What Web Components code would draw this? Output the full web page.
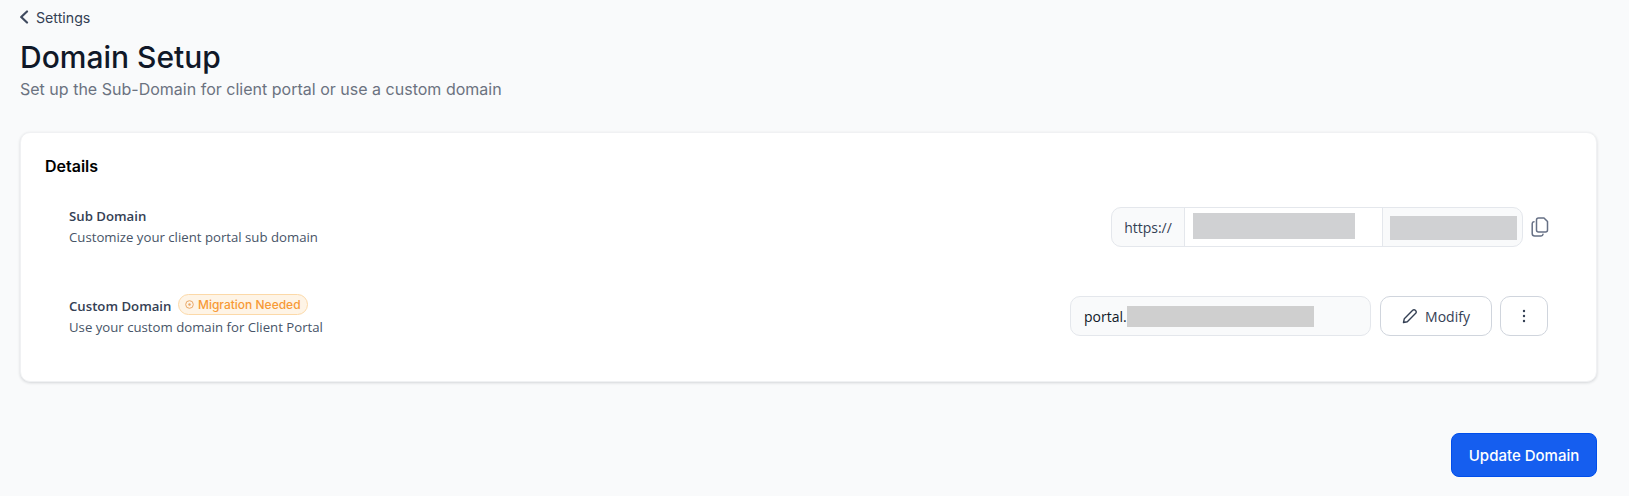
<!DOCTYPE html>
<html lang="en">
<head>
<meta charset="UTF-8">
<title>Domain Setup</title>
<style>
  html, body { margin: 0; height: 100%; }
  body { background: #f9fafb; font-family: Inter, "Liberation Sans", sans-serif; overflow: hidden; }
</style>
</head>
<body>
<page-head back="Settings" heading="Domain Setup" sub="Set up the Sub-Domain for client portal or use a custom domain"></page-head>

<details-card heading="Details">
  <setting-row>
    <span slot="name">Sub Domain</span>
    <span slot="desc">Customize your client portal sub domain</span>
    <domain-group></domain-group>
  </setting-row>
  <setting-row class="second">
    <span slot="name">Custom Domain</span>
    <warn-badge slot="badge">Migration Needed</warn-badge>
    <span slot="desc">Use your custom domain for Client Portal</span>
    <custom-domain></custom-domain>
  </setting-row>
</details-card>

<page-foot><primary-btn>Update Domain</primary-btn></page-foot>

<template id="head-tpl">
  <style>
    :host { display: block; padding: 8px 20px 0; }
    .back { display: flex; align-items: center; gap: 6px; height: 18px; font-size: 14.2px; color: #344054; }
    svg { display: block; }
    h1 { margin: 12px 0 0; font-size: 30px; line-height: 38px; font-weight: 500; color: #101828; }
    p { margin: 3px 0 0; font-size: 16px; line-height: 20px; letter-spacing: .01px; color: #6b7280; }
  </style>
  <div class="back">
    <svg width="10" height="14" viewBox="0 0 10 14" fill="none" stroke="#3f4a5f" stroke-width="2.200" stroke-linecap="round" stroke-linejoin="round"><path d="M7 1.500 1.200 7 7 12.500"/></svg>
    <span id="back"></span>
  </div>
  <h1 id="heading"></h1>
  <p id="sub"></p>
</template>

<template id="card-tpl">
  <style>
    :host { display: block; margin: 33px 32px 0 20px; height: 250px; box-sizing: border-box; background: #fff; border-radius: 10px; border: 1px solid #f0f1f3; box-shadow: 0 1px 3px rgba(16,24,40,.16); padding: 23px 24px 0; }
    h2 { margin: 0 0 31px; font-size: 16px; line-height: 20px; font-weight: 600; color: #000; }
  </style>
  <h2 id="heading"></h2>
  <slot></slot>
</template>

<template id="row-tpl">
  <style>
    :host { display: flex; align-items: center; justify-content: space-between; padding: 0 24px; height: 40px; font-family: "Open Sans", "Noto Sans", sans-serif; }
    :host(.second) { margin-top: 49px; }
    :host(:not(.second)) .text { margin-top: -2px; }
    .name { display: flex; align-items: center; gap: 7px; font-size: 13.2px; line-height: 20px; font-weight: 600; color: #344054; }
    .desc { font-size: 13.2px; line-height: 20px; color: #475467; margin-top: 1px; }
  </style>
  <div class="text">
    <div class="name"><slot name="name"></slot><slot name="badge"></slot></div>
    <div class="desc"><slot name="desc"></slot></div>
  </div>
  <slot></slot>
</template>

<template id="badge-tpl">
  <style>
    :host { display: inline-flex; align-items: center; gap: 3.500px; height: 21px; margin-top: -2px; padding: 0 6px; box-sizing: border-box; background: #fef4e6; border: 1px solid #fcd9a8; border-radius: 11px; font-family: Inter, sans-serif; font-size: 12px; font-weight: 500; color: #f79a36; }
    svg { display: block; }
  </style>
  <svg width="9" height="9" viewBox="0 0 9 9" fill="none" stroke="#e9a868"><circle cx="4.500" cy="4.500" r="3.800"/><circle cx="4.500" cy="4.500" r="1.200" fill="#e9a868" stroke="none"/></svg>
  <slot></slot>
</template>

<template id="group-tpl">
  <style>
    :host { display: flex; align-items: center; gap: 8px; margin-right: -1px; }
    .group { display: flex; width: 412px; height: 40px; box-sizing: border-box; border: 1px solid #e4e7ec; border-radius: 10px; overflow: hidden; background: #f9fafb; }
    .pre { width: 72px; box-sizing: border-box; display: flex; align-items: center; justify-content: center; font-size: 14px; color: #344054; }
    .mid { width: 199px; box-sizing: border-box; background: #fff; border-left: 1px solid #e4e7ec; border-right: 1px solid #e4e7ec; padding: 5px 0 0 8px; }
    .suf { flex: 1; padding: 8px 0 0 7px; }
    .blur { background: #d0d1d3; }
    svg { display: block; margin-top: -1px; }
  </style>
  <div class="group">
    <div class="pre">https://</div>
    <div class="mid"><div class="blur" style="width:162px;height:26px"></div></div>
    <div class="suf"><div class="blur" style="width:127px;height:24px"></div></div>
  </div>
  <svg width="18" height="20" viewBox="0 0 18 20" fill="none" stroke="#667085" stroke-width="1.500" stroke-linecap="round" stroke-linejoin="round">
    <path d="M7.500 1H13l3.500 3.500V13a2 2 0 0 1-2 2H7.500a2 2 0 0 1-2-2V3a2 2 0 0 1 2-2Z"/>
    <path d="M3 4.700A2 2 0 0 0 1.200 6.700v9.800A2.500 2.500 0 0 0 3.700 19H10a2 2 0 0 0 2-1.800"/>
  </svg>
</template>

<template id="custom-tpl">
  <style>
    :host { display: flex; align-items: center; gap: 9px; }
    .input { width: 301px; height: 40px; box-sizing: border-box; display: flex; align-items: center; padding-left: 13px; border: 1px solid #e4e7ec; border-radius: 10px; background: #f9fafb; font-size: 14px; color: #101828; }
    .blur { width: 187px; height: 21px; background: #cfcfcf; }
    svg { display: block; }
  </style>
  <div class="input">portal.<div class="blur"></div></div>
  <outline-btn style="width:112px">
    <svg width="16" height="16" viewBox="0 0 16 16" fill="none" stroke="#344054" stroke-width="1.400" stroke-linecap="round" stroke-linejoin="round"><path d="M1.500 14.500l.8-3.800 8.400-8.400a1.800 1.800 0 0 1 2.600 0l.4.400a1.800 1.800 0 0 1 0 2.600l-8.400 8.400-3.800.8Z"/></svg>
    Modify
  </outline-btn>
  <outline-btn style="width:48px;margin-left:-1px">
    <svg width="4" height="14" viewBox="0 0 4 14" fill="#344054"><circle cx="2" cy="2" r="1.200"/><circle cx="2" cy="7" r="1.200"/><circle cx="2" cy="12" r="1.200"/></svg>
  </outline-btn>
</template>

<template id="outline-tpl">
  <style>
    :host { display: inline-flex; align-items: center; justify-content: center; gap: 7px; height: 40px; box-sizing: border-box; background: #fff; border: 1px solid #d0d5dd; border-radius: 10px; font-size: 14px; font-weight: 500; color: #344054; }
  </style>
  <slot></slot>
</template>

<template id="foot-tpl">
  <style>
    :host { display: flex; justify-content: flex-end; margin: 51px 32px 0 0; }
  </style>
  <slot></slot>
</template>

<template id="primary-tpl">
  <style>
    :host { display: inline-flex; align-items: center; justify-content: center; width: 146px; height: 44px; box-sizing: border-box; background: #155eef; border: 1px solid #004eeb; border-radius: 8px; font-size: 15px; font-weight: 500; color: #fff; }
  </style>
  <slot></slot>
</template>

<script>
  // every component just clones its template into an open shadow root
  function comp(tag, tplId, setup) {
    customElements.define(tag, class extends HTMLElement {
      connectedCallback() {
        if (this.shadowRoot) return;
        this.attachShadow({mode: 'open'});
        this.shadowRoot.append(document.getElementById(tplId).content.cloneNode(true));
        if (setup) setup(this, this.shadowRoot);
      }
    });
  }

  comp('page-head', 'head-tpl', (el, root) => {
    for (const k of ['back', 'heading', 'sub']) root.getElementById(k).textContent = el.getAttribute(k);
  });
  comp('details-card', 'card-tpl', (el, root) => {
    root.getElementById('heading').textContent = el.getAttribute('heading');
  });
  comp('setting-row', 'row-tpl');
  comp('warn-badge', 'badge-tpl');
  comp('domain-group', 'group-tpl');
  comp('custom-domain', 'custom-tpl');
  comp('outline-btn', 'outline-tpl');
  comp('page-foot', 'foot-tpl');
  comp('primary-btn', 'primary-tpl');
</script>
</body>
</html>
